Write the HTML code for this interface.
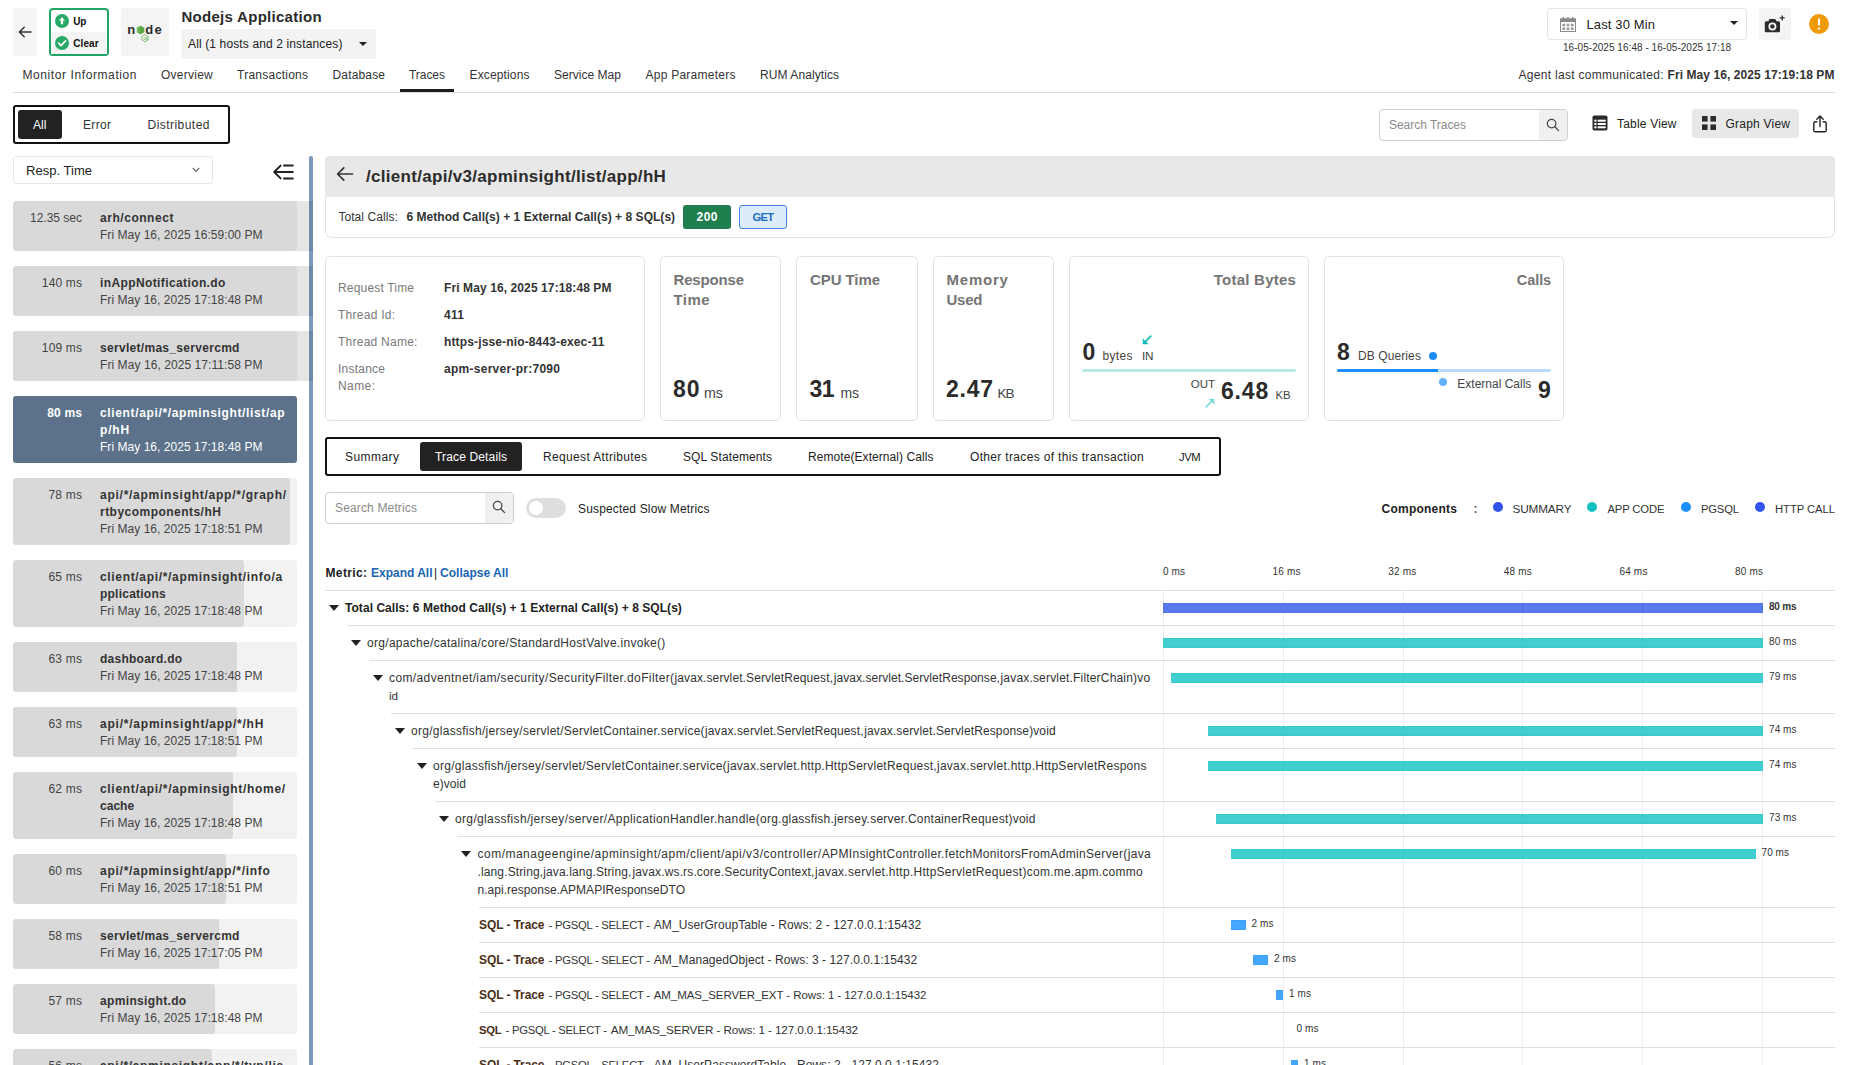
<!DOCTYPE html>
<html lang="en">
<head>
<meta charset="utf-8">
<title>Nodejs Application - Traces</title>
<style>
*{box-sizing:border-box;margin:0;padding:0}
html,body{width:1852px;height:1065px;overflow:hidden;background:#fff}
body{position:relative;font-family:"Liberation Sans",Arial,sans-serif;font-size:12px;color:#333}
.a{position:absolute;white-space:nowrap}
svg{display:block;overflow:visible}
.gbtn{background:#f4f4f4;border-radius:3px}
.status{left:49px;top:8px;width:60px;height:48px;border:2px solid #21a565;border-radius:4px;background:#fff}
.status .row2{position:absolute;left:0;right:0;top:22px;bottom:0;background:#f4f4f4}
.caret{border-left:4px solid transparent;border-right:4px solid transparent;border-top:4.5px solid #222}
.it{position:absolute;left:13px;width:284px;border-radius:3px;background:rgba(0,0,0,.05)}
.bar{position:absolute;left:13px;background:rgba(0,0,0,.1);border-radius:3px 0 0 3px}
.card{border:1px solid #e2e2e2;border-radius:5px;background:#fff;top:256px;height:165px}
.hl{height:1px;background:#e0e0e0}
.tri{width:0;height:0;border-left:5px solid transparent;border-right:5px solid transparent;border-top:6px solid #222}
.gb{height:10px}
.g1{background:rgba(47,84,235,.79);box-shadow:inset 0 1px rgba(47,84,235,.22),inset 0 -1px rgba(47,84,235,.22)}.g2{background:rgba(19,194,194,.8);box-shadow:inset 0 1px rgba(19,194,194,.25),inset 0 -1px rgba(19,194,194,.25)}.g3{background:rgba(24,144,255,.8);box-shadow:inset 0 1px rgba(24,144,255,.25),inset 0 -1px rgba(24,144,255,.25)}
.grid{top:591px;width:1px;height:474px;background:#ededed}
.dot{border-radius:50%}
</style>
</head>
<body>
<!-- HEADER -->
<div class="a gbtn" style="left:13px;top:8px;width:24px;height:48px">
<svg width="24" height="48" viewBox="0 0 24 48"><path d="M18 24H6.6M11.2 19.2L6.4 24l4.8 4.8" fill="none" stroke="#333" stroke-width="1.5" stroke-linecap="round" stroke-linejoin="round"/></svg>
</div>
<div class="a status">
<div class="row2"></div>
<svg class="a" style="left:4px;top:4px" width="14" height="14" viewBox="0 0 14 14"><circle cx="7" cy="7" r="7" fill="#27a866"/><path d="M7 3.2L3.9 6.6h2v3.6h2.2V6.6h2z" fill="#fff"/></svg>
<svg class="a" style="left:4px;top:26px" width="14" height="14" viewBox="0 0 14 14"><circle cx="7" cy="7" r="7" fill="#27a866"/><path d="M3.6 7.2l2.4 2.4 4.6-4.8" fill="none" stroke="#fff" stroke-width="1.7" stroke-linecap="round" stroke-linejoin="round"/></svg>
</div>
<div class="a" style="font-size:10px;font-weight:700;letter-spacing:-0.14px;color:#111;line-height:13px;top:15px;left:73.2px">Up</div>
<div class="a" style="font-size:10px;font-weight:700;letter-spacing:0.12px;color:#111;line-height:13px;top:37px;left:73.2px">Clear</div>
<div class="a gbtn" style="left:121px;top:8px;width:48px;height:48px">
<svg width="48" height="48" viewBox="0 0 48 48"><g font-family="Liberation Sans,sans-serif" font-size="13" font-weight="700" fill="#2e2e2e"><text x="6.3" y="25.6">n</text><text x="24.3" y="25.6">d</text><text x="33.4" y="25.6">e</text></g><path d="M19.6 17.7l3.7 2.15v4.3l-3.7 2.15-3.7-2.15v-4.3z" fill="#5aa944"/><path d="M19.6 17.7l-3.7 2.15v4.3l2.2 1.3z" fill="#6cbb52"/><path d="M24 26.4l3.2 1.85v3.7L24 33.8l-3.2-1.85v-3.7z" fill="none" stroke="#6bb85a" stroke-width=".8"/><text x="22.3" y="31.5" font-size="3.6" font-family="Liberation Sans,sans-serif" fill="#6bb85a" font-weight="700">JS</text></svg>
</div>
<div class="a" style="font-size:15px;font-weight:700;letter-spacing:0.28px;color:#2b2b2b;line-height:19px;top:7px;left:181.5px">Nodejs Application</div>
<div class="a gbtn" style="left:181px;top:29px;width:195px;height:30px;background:#f3f3f3"></div>
<div class="a" style="font-size:12px;letter-spacing:0.13px;color:#222;line-height:16px;top:36px;left:188px">All (1 hosts and 2 instances)</div>
<div class="a caret" style="left:359px;top:41.5px"></div>
<!-- time select -->
<div class="a" style="left:1547px;top:8px;width:200px;height:32px;border:1px solid #e4e4e4;border-radius:3px">
<svg class="a" style="left:12px;top:8px" width="16" height="15" viewBox="0 0 16 15"><rect x=".5" y="1.8" width="15" height="12.7" fill="#fff" stroke="#8a8a8a"/><rect x=".5" y="1.8" width="15" height="3.2" fill="#8a8a8a"/><path d="M3.4 0v2.6M8 0v2.6M12.6 0v2.6" stroke="#8a8a8a" stroke-width="1.4"/><g fill="#9a9a9a"><rect x="2.4" y="6.8" width="2.7" height="2.5"/><rect x="6.65" y="6.8" width="2.7" height="2.5"/><rect x="10.9" y="6.8" width="2.7" height="2.5"/><rect x="2.4" y="10.5" width="2.7" height="2.5"/><rect x="6.65" y="10.5" width="2.7" height="2.5"/><rect x="10.9" y="10.5" width="2.7" height="2.5"/></g></svg>
</div>
<div class="a" style="font-size:13px;letter-spacing:0.13px;color:#222;line-height:17px;top:16px;left:1586.5px">Last 30 Min</div>
<div class="a caret" style="left:1730px;top:21px"></div>
<div class="a" style="font-size:10px;letter-spacing:0.04px;color:#333;line-height:13px;top:41px;left:1563px">16-05-2025 16:48 - 16-05-2025 17:18</div>
<div class="a gbtn" style="left:1759px;top:8px;width:32px;height:32px">
<svg width="32" height="32" viewBox="0 0 32 32"><path d="M5.8 14.8c0-.9.7-1.6 1.6-1.6h2l1.1-2.2h5.8l1.1 2.2h2c.9 0 1.6.7 1.6 1.6v7.9c0 .9-.7 1.6-1.6 1.6H7.4c-.9 0-1.6-.7-1.6-1.6z" fill="#2b2b2b"/><circle cx="13.4" cy="18.4" r="4" fill="#f4f4f4"/><circle cx="13.4" cy="18.4" r="2.2" fill="#2b2b2b"/><path d="M23.2 7.4v5M20.7 9.9h5" stroke="#2b2b2b" stroke-width="1.3"/></svg>
</div>
<svg class="a" style="left:1809px;top:14px" width="20" height="20" viewBox="0 0 20 20"><circle cx="10" cy="10" r="10" fill="#f09b05"/><rect x="9" y="4.3" width="2" height="7.5" rx="1" fill="#fff"/><circle cx="10" cy="14.6" r="1.2" fill="#fff"/></svg>
<!-- NAV -->
<div class="a" style="letter-spacing:0.59px;line-height:16px;top:67px;left:22.5px">Monitor Information</div>
<div class="a" style="letter-spacing:0.25px;line-height:16px;top:67px;left:161px">Overview</div>
<div class="a" style="letter-spacing:0.25px;line-height:16px;top:67px;left:237px">Transactions</div>
<div class="a" style="letter-spacing:0.16px;line-height:16px;top:67px;left:332.5px">Database</div>
<div class="a" style="letter-spacing:-0.05px;line-height:16px;top:67px;left:409px">Traces</div>
<div class="a" style="letter-spacing:0.14px;line-height:16px;top:67px;left:469.5px">Exceptions</div>
<div class="a" style="letter-spacing:0.03px;line-height:16px;top:67px;left:554px">Service Map</div>
<div class="a" style="letter-spacing:0.25px;line-height:16px;top:67px;left:645.5px">App Parameters</div>
<div class="a" style="letter-spacing:0.08px;line-height:16px;top:67px;left:760px">RUM Analytics</div>
<div class="a" style="left:400px;top:89px;width:54px;height:3px;background:#1c1c1c"></div>
<div class="a" style="left:13px;top:92px;width:1822px;height:1px;background:#dcdcdc"></div>
<div class="a" style="letter-spacing:0.3px;line-height:16px;top:67px;left:1518.5px">Agent last communicated:</div>
<div class="a" style="font-weight:700;letter-spacing:0.08px;line-height:16px;top:67px;left:1667.5px">Fri May 16, 2025 17:19:18 PM</div>
<!-- FILTER -->
<div class="a" style="left:13px;top:105px;width:217px;height:39px;border:2px solid #111;border-radius:3px"></div>
<div class="a" style="left:18px;top:110px;width:44px;height:29px;background:#222;border-radius:3px"></div>
<div class="a" style="letter-spacing:0.08px;color:#fff;line-height:16px;top:117px;left:33px">All</div>
<div class="a" style="letter-spacing:0.33px;line-height:16px;top:117px;left:83px">Error</div>
<div class="a" style="letter-spacing:0.46px;line-height:16px;top:117px;left:147.5px">Distributed</div>
<div class="a" style="left:1379px;top:109px;width:189px;height:32px;border:1px solid #cfcfcf;border-radius:4px;overflow:hidden"><div class="a" style="left:159px;top:0;width:29px;height:30px;background:#f0f0f0"></div>
<svg class="a" style="left:166.2px;top:8.3px" width="14" height="14" viewBox="0 0 14 14"><circle cx="5.6" cy="5.6" r="4.3" fill="none" stroke="#444" stroke-width="1.2"/><path d="M8.8 8.8l3.8 3.8" stroke="#444" stroke-width="1.3" stroke-linecap="round"/></svg></div>
<div class="a" style="letter-spacing:-0.03px;color:#8a8a8a;line-height:16px;top:117px;left:1389px">Search Traces</div>
<svg class="a" style="left:1592px;top:115px" width="16" height="16" viewBox="0 0 16 16"><rect x=".5" y=".5" width="15" height="15" rx="1.8" fill="#2b2b2b"/><g fill="#fff"><rect x="2.3" y="4.7" width="2.2" height="2"/><rect x="5.7" y="4.7" width="8" height="2"/><rect x="2.3" y="8" width="2.2" height="2"/><rect x="5.7" y="8" width="8" height="2"/><rect x="2.3" y="11.3" width="2.2" height="2"/><rect x="5.7" y="11.3" width="8" height="2"/></g></svg>
<div class="a" style="letter-spacing:0.19px;color:#222;line-height:16px;top:116px;left:1617px">Table View</div>
<div class="a" style="left:1692px;top:109px;width:107px;height:28.5px;background:#e8e8e8;border-radius:3px"></div>
<svg class="a" style="left:1702px;top:116px" width="14" height="14" viewBox="0 0 14 14"><g fill="#2b2b2b"><rect width="5.6" height="5.6"/><rect x="8.4" width="5.6" height="5.6"/><rect y="8.4" width="5.6" height="5.6"/><rect x="8.4" y="8.4" width="5.6" height="5.6"/></g></svg>
<div class="a" style="letter-spacing:0.22px;color:#222;line-height:16px;top:116px;left:1725.5px">Graph View</div>
<svg class="a" style="left:1813px;top:115px" width="14" height="18" viewBox="0 0 14 18"><path d="M3.8 6.8H2.4c-.9 0-1.6.7-1.6 1.6v6.8c0 .9.7 1.6 1.6 1.6h9.2c.9 0 1.6-.7 1.6-1.6V8.4c0-.9-.7-1.6-1.6-1.6h-1.4" fill="none" stroke="#222" stroke-width="1.4" stroke-linecap="round"/><path d="M7 11.5V1.2M3.8 4.2L7 1l3.2 3.2" fill="none" stroke="#222" stroke-width="1.4" stroke-linecap="round" stroke-linejoin="round"/></svg>
<!-- LIST -->
<div class="a" style="left:13px;top:156px;width:200px;height:28px;border:1px solid #e6e6e6;border-radius:3px"></div>
<div class="a" style="font-size:13px;letter-spacing:0.03px;color:#222;line-height:17px;top:162px;left:26px">Resp. Time</div>
<svg class="a" style="left:192px;top:167px" width="8" height="6" viewBox="0 0 8 6"><path d="M.8 1l3.2 3.4L7.2 1" fill="none" stroke="#666" stroke-width="1.1"/></svg>
<svg class="a" style="left:272px;top:163px" width="22" height="18" viewBox="0 0 22 18"><path d="M12 2.4h8.8M2.2 9h18.6M12 15.6h8.8M8.6 2.6L2.2 9l6.4 6.4" fill="none" stroke="#222" stroke-width="2" stroke-linecap="round" stroke-linejoin="round"/></svg>
<div class="a" style="left:309px;top:156px;width:4px;height:909px;background:#7a9abb;border-radius:2px 2px 0 0"></div>
<div class="it" style="top:201px;height:50px"></div>
<div class="bar" style="top:201px;height:50px;width:300.0px;border-radius:3px 0 0 3px"></div>
<div class="a" style="letter-spacing:-0.01px;color:#444;line-height:16px;top:210px;right:1770.01px">12.35 sec</div>
<div>
<div class="a" style="font-weight:700;letter-spacing:0.54px;color:#333;line-height:16px;top:210px;left:100px">arh/connect</div>
</div>
<div class="a" style="letter-spacing:0.04px;color:#444;line-height:16px;top:227px;left:100px">Fri May 16, 2025 16:59:00 PM</div>
<div class="it" style="top:266px;height:50px"></div>
<div class="bar" style="top:266px;height:50px;width:300.0px;border-radius:3px 0 0 3px"></div>
<div class="a" style="letter-spacing:0.17px;color:#444;line-height:16px;top:275px;right:1769.83px">140 ms</div>
<div>
<div class="a" style="font-weight:700;letter-spacing:0.39px;color:#333;line-height:16px;top:275px;left:100px">inAppNotification.do</div>
</div>
<div class="a" style="letter-spacing:0.04px;color:#444;line-height:16px;top:292px;left:100px">Fri May 16, 2025 17:18:48 PM</div>
<div class="it" style="top:331px;height:50px"></div>
<div class="bar" style="top:331px;height:50px;width:300.0px;border-radius:3px 0 0 3px"></div>
<div class="a" style="letter-spacing:0.17px;color:#444;line-height:16px;top:340px;right:1769.83px">109 ms</div>
<div>
<div class="a" style="font-weight:700;letter-spacing:0.3px;color:#333;line-height:16px;top:340px;left:100px">servlet/mas_servercmd</div>
</div>
<div class="a" style="letter-spacing:0.07px;color:#444;line-height:16px;top:357px;left:100px">Fri May 16, 2025 17:11:58 PM</div>
<div class="it" style="top:396px;height:67px;background:#5b728a"></div>
<div class="a" style="font-weight:700;letter-spacing:0.19px;color:#fff;line-height:16px;top:405px;right:1769.81px">80 ms</div>
<div>
<div class="a" style="font-weight:700;letter-spacing:0.64px;color:#fff;line-height:16px;top:405px;left:100px">client/api/*/apminsight/list/ap</div>
<div class="a" style="font-weight:700;letter-spacing:0.84px;color:#fff;line-height:16px;top:422px;left:100px">p/hH</div>
</div>
<div class="a" style="letter-spacing:0.04px;color:#fff;line-height:16px;top:439px;left:100px">Fri May 16, 2025 17:18:48 PM</div>
<div class="it" style="top:478px;height:67px"></div>
<div class="bar" style="top:478px;height:67px;width:276.9px;border-radius:3px"></div>
<div class="a" style="letter-spacing:0.23px;color:#444;line-height:16px;top:487px;right:1769.77px">78 ms</div>
<div>
<div class="a" style="font-weight:700;letter-spacing:0.74px;color:#333;line-height:16px;top:487px;left:100px">api/*/apminsight/app/*/graph/</div>
<div class="a" style="font-weight:700;letter-spacing:0.47px;color:#333;line-height:16px;top:504px;left:100px">rtbycomponents/hH</div>
</div>
<div class="a" style="letter-spacing:0.04px;color:#444;line-height:16px;top:521px;left:100px">Fri May 16, 2025 17:18:51 PM</div>
<div class="it" style="top:560px;height:67px"></div>
<div class="bar" style="top:560px;height:67px;width:230.8px;border-radius:3px"></div>
<div class="a" style="letter-spacing:0.23px;color:#444;line-height:16px;top:569px;right:1769.77px">65 ms</div>
<div>
<div class="a" style="font-weight:700;letter-spacing:0.67px;color:#333;line-height:16px;top:569px;left:100px">client/api/*/apminsight/info/a</div>
<div class="a" style="font-weight:700;letter-spacing:0.23px;color:#333;line-height:16px;top:586px;left:100px">pplications</div>
</div>
<div class="a" style="letter-spacing:0.04px;color:#444;line-height:16px;top:603px;left:100px">Fri May 16, 2025 17:18:48 PM</div>
<div class="it" style="top:642px;height:50px"></div>
<div class="bar" style="top:642px;height:50px;width:223.7px;border-radius:3px"></div>
<div class="a" style="letter-spacing:0.23px;color:#444;line-height:16px;top:651px;right:1769.77px">63 ms</div>
<div>
<div class="a" style="font-weight:700;letter-spacing:0.25px;color:#333;line-height:16px;top:651px;left:100px">dashboard.do</div>
</div>
<div class="a" style="letter-spacing:0.04px;color:#444;line-height:16px;top:668px;left:100px">Fri May 16, 2025 17:18:48 PM</div>
<div class="it" style="top:707px;height:50px"></div>
<div class="bar" style="top:707px;height:50px;width:223.7px;border-radius:3px"></div>
<div class="a" style="letter-spacing:0.23px;color:#444;line-height:16px;top:716px;right:1769.77px">63 ms</div>
<div>
<div class="a" style="font-weight:700;letter-spacing:0.78px;color:#333;line-height:16px;top:716px;left:100px">api/*/apminsight/app/*/hH</div>
</div>
<div class="a" style="letter-spacing:0.04px;color:#444;line-height:16px;top:733px;left:100px">Fri May 16, 2025 17:18:51 PM</div>
<div class="it" style="top:772px;height:67px"></div>
<div class="bar" style="top:772px;height:67px;width:220.1px;border-radius:3px"></div>
<div class="a" style="letter-spacing:0.23px;color:#444;line-height:16px;top:781px;right:1769.77px">62 ms</div>
<div>
<div class="a" style="font-weight:700;letter-spacing:0.68px;color:#333;line-height:16px;top:781px;left:100px">client/api/*/apminsight/home/</div>
<div class="a" style="font-weight:700;letter-spacing:0.02px;color:#333;line-height:16px;top:798px;left:100px">cache</div>
</div>
<div class="a" style="letter-spacing:0.04px;color:#444;line-height:16px;top:815px;left:100px">Fri May 16, 2025 17:18:48 PM</div>
<div class="it" style="top:854px;height:50px"></div>
<div class="bar" style="top:854px;height:50px;width:213.0px;border-radius:3px"></div>
<div class="a" style="letter-spacing:0.23px;color:#444;line-height:16px;top:863px;right:1769.77px">60 ms</div>
<div>
<div class="a" style="font-weight:700;letter-spacing:0.74px;color:#333;line-height:16px;top:863px;left:100px">api/*/apminsight/app/*/info</div>
</div>
<div class="a" style="letter-spacing:0.04px;color:#444;line-height:16px;top:880px;left:100px">Fri May 16, 2025 17:18:51 PM</div>
<div class="it" style="top:919px;height:50px"></div>
<div class="bar" style="top:919px;height:50px;width:205.9px;border-radius:3px"></div>
<div class="a" style="letter-spacing:0.23px;color:#444;line-height:16px;top:928px;right:1769.77px">58 ms</div>
<div>
<div class="a" style="font-weight:700;letter-spacing:0.3px;color:#333;line-height:16px;top:928px;left:100px">servlet/mas_servercmd</div>
</div>
<div class="a" style="letter-spacing:0.04px;color:#444;line-height:16px;top:945px;left:100px">Fri May 16, 2025 17:17:05 PM</div>
<div class="it" style="top:984px;height:50px"></div>
<div class="bar" style="top:984px;height:50px;width:202.3px;border-radius:3px"></div>
<div class="a" style="letter-spacing:0.23px;color:#444;line-height:16px;top:993px;right:1769.77px">57 ms</div>
<div>
<div class="a" style="font-weight:700;letter-spacing:0.35px;color:#333;line-height:16px;top:993px;left:100px">apminsight.do</div>
</div>
<div class="a" style="letter-spacing:0.04px;color:#444;line-height:16px;top:1010px;left:100px">Fri May 16, 2025 17:18:48 PM</div>
<div class="it" style="top:1049px;height:67px"></div>
<div class="bar" style="top:1049px;height:67px;width:198.8px;border-radius:3px"></div>
<div class="a" style="letter-spacing:0.23px;color:#444;line-height:16px;top:1058px;right:1769.77px">56 ms</div>
<div>
<div class="a" style="font-weight:700;letter-spacing:0.68px;color:#333;line-height:16px;top:1058px;left:100px">api/*/apminsight/app/*/typ/lis</div>
<div class="a" style="font-weight:700;letter-spacing:1.22px;color:#333;line-height:16px;top:1075px;left:100px">t/hH</div>
</div>
<div class="a" style="letter-spacing:0.04px;color:#444;line-height:16px;top:1092px;left:100px">Fri May 16, 2025 17:18:51 PM</div>
<!-- MAIN -->
<div class="a" style="left:325px;top:156px;width:1510px;height:41px;background:#e8e8e8;border-radius:4px 4px 0 0"></div>
<svg class="a" style="left:336px;top:166px" width="18" height="16" viewBox="0 0 18 16"><path d="M16.5 8H2M7.8 1.8L1.6 8l6.2 6.2" fill="none" stroke="#333" stroke-width="1.7" stroke-linecap="round" stroke-linejoin="round"/></svg>
<div class="a" style="font-size:17px;font-weight:700;letter-spacing:0.3px;color:#2b2b2b;line-height:21px;top:166px;left:366px">/client/api/v3/apminsight/list/app/hH</div>
<div class="a" style="left:325px;top:197px;width:1510px;height:41px;border:1px solid #e2e2e2;border-top:0;border-radius:0 0 7px 7px"></div>
<div>
<div class="a" style="letter-spacing:0.07px;line-height:16px;top:209px;left:338.4px">Total Calls:</div>
<div class="a" style="font-weight:700;letter-spacing:0.04px;line-height:16px;top:209px;left:406.5px">6 Method Call(s) + 1 External Call(s) + 8 SQL(s)</div>
</div>
<div class="a" style="left:683px;top:205px;width:48px;height:24px;background:#1e7e4d;border-radius:3px"></div>
<div class="a" style="font-weight:700;letter-spacing:0.48px;color:#fff;line-height:16px;top:209px;left:696.5px">200</div>
<div class="a" style="left:739px;top:205px;width:48px;height:24px;background:#dcecfb;border:1px solid #3d87d6;border-radius:3px"></div>
<div class="a" style="font-size:11.25px;font-weight:700;letter-spacing:-0.81px;color:#1b6ec2;line-height:14px;top:210px;left:752.5px">GET</div>
<div class="a card" style="left:325px;width:320px"></div>
<div class="a" style="letter-spacing:0.18px;color:#7a7a7a;line-height:16px;top:280px;left:338px">Request Time</div>
<div class="a" style="letter-spacing:0.26px;color:#7a7a7a;line-height:16px;top:307px;left:338px">Thread Id:</div>
<div class="a" style="letter-spacing:0.25px;color:#7a7a7a;line-height:16px;top:334px;left:338px">Thread Name:</div>
<div class="a" style="letter-spacing:0.23px;color:#7a7a7a;line-height:16px;top:361px;left:338px">Instance</div>
<div class="a" style="letter-spacing:0.41px;color:#7a7a7a;line-height:16px;top:378px;left:338px">Name:</div>
<div class="a" style="font-weight:700;letter-spacing:0.1px;line-height:16px;top:280px;left:444px">Fri May 16, 2025 17:18:48 PM</div>
<div class="a" style="font-weight:700;letter-spacing:0.32px;line-height:16px;top:307px;left:444px">411</div>
<div class="a" style="font-weight:700;letter-spacing:0.14px;line-height:16px;top:334px;left:444px">https-jsse-nio-8443-exec-11</div>
<div class="a" style="font-weight:700;letter-spacing:0.27px;line-height:16px;top:361px;left:444px">apm-server-pr:7090</div>
<div class="a card" style="left:660px;width:121px"></div>
<div class="a card" style="left:796px;width:122px"></div>
<div class="a card" style="left:933px;width:121px"></div>
<div class="a card" style="left:1069px;width:240px"></div>
<div class="a card" style="left:1324px;width:240px"></div>
<div class="a" style="font-size:15px;font-weight:700;letter-spacing:-0.17px;color:#757575;line-height:19px;top:270px;left:673.5px">Response</div>
<div class="a" style="font-size:15px;font-weight:700;letter-spacing:0.42px;color:#757575;line-height:19px;top:290px;left:673.5px">Time</div>
<div class="a" style="font-size:15px;font-weight:700;letter-spacing:-0.08px;color:#757575;line-height:19px;top:270px;left:810px">CPU Time</div>
<div class="a" style="font-size:15px;font-weight:700;letter-spacing:0.79px;color:#757575;line-height:19px;top:270px;left:946.5px">Memory</div>
<div class="a" style="font-size:15px;font-weight:700;letter-spacing:-0.23px;color:#757575;line-height:19px;top:290px;left:946.5px">Used</div>
<div class="a" style="font-size:15px;font-weight:700;letter-spacing:0.25px;color:#757575;line-height:19px;top:270px;left:1213.7px">Total Bytes</div>
<div class="a" style="font-size:14.5px;font-weight:700;letter-spacing:-0.07px;color:#757575;line-height:18px;top:271px;left:1516.8px">Calls</div>
<div class="a" style="font-size:23px;font-weight:700;letter-spacing:0.91px;color:#2b2b2b;line-height:28px;top:375px;left:673px">80</div>
<div class="a" style="font-size:14.25px;letter-spacing:-0.01px;color:#444;line-height:18px;top:384px;left:704px">ms</div>
<div class="a" style="font-size:23px;font-weight:700;letter-spacing:-0.59px;color:#2b2b2b;line-height:28px;top:375px;left:809.5px">31</div>
<div class="a" style="font-size:14px;letter-spacing:-0.18px;color:#444;line-height:18px;top:384px;left:840.5px">ms</div>
<div class="a" style="font-size:23px;font-weight:700;letter-spacing:0.74px;color:#2b2b2b;line-height:28px;top:375px;left:946px">2.47</div>
<div class="a" style="font-size:13.5px;letter-spacing:-1.02px;color:#444;line-height:17px;top:385px;left:997.5px">KB</div>
<div class="a" style="font-size:23px;font-weight:700;letter-spacing:-0.2px;color:#2b2b2b;line-height:28px;top:338px;left:1082.5px">0</div>
<div class="a" style="letter-spacing:0.33px;color:#444;line-height:16px;top:348px;left:1102.5px">bytes</div>
<div class="a" style="font-size:11.75px;letter-spacing:-0.15px;color:#444;line-height:15px;top:348px;left:1142px">IN</div>
<svg class="a" style="left:1142px;top:335px" width="10" height="10" viewBox="0 0 11 11"><path d="M10.2.8L3.5 7.5" fill="none" stroke="#18bcbc" stroke-width="1.9"/><path d="M.8 10.2V3.7l6.5 6.5z" fill="#18bcbc"/></svg>
<div class="a" style="left:1082px;top:369px;width:214px;height:3px;background:#b6e9e8;border-radius:1.5px"></div>
<div class="a" style="font-size:11.5px;letter-spacing:0.01px;color:#444;line-height:14px;top:377px;left:1190.7px">OUT</div>
<svg class="a" style="left:1205px;top:398px" width="10" height="10" viewBox="0 0 11 11"><path d="M.8 10.2L7.5 3.5" fill="none" stroke="#7fdcda" stroke-width="1.9"/><path d="M10.2.8v6.5L3.7.8z" fill="#7fdcda"/></svg>
<div class="a" style="font-size:23px;font-weight:700;letter-spacing:0.81px;color:#2b2b2b;line-height:28px;top:377px;left:1221px">6.48</div>
<div class="a" style="font-size:11.25px;letter-spacing:-0.01px;color:#444;line-height:14px;top:388px;left:1275.5px">KB</div>
<div class="a" style="font-size:23px;font-weight:700;letter-spacing:0.4px;color:#2b2b2b;line-height:28px;top:338px;left:1337px">8</div>
<div class="a" style="letter-spacing:0.11px;color:#444;line-height:16px;top:348px;left:1357.9px">DB Queries</div>
<div class="a dot" style="left:1429px;top:352px;width:8px;height:8px;background:#1b8cfa"></div>
<div class="a" style="left:1337px;top:369px;width:214px;height:3px;background:#badbfd;border-radius:1.5px"></div>
<div class="a" style="left:1337px;top:369px;width:101px;height:3px;background:#1b8cfa;border-radius:1.5px 0 0 1.5px"></div>
<div class="a dot" style="left:1438.6px;top:378.4px;width:8px;height:8px;background:#63affb"></div>
<div class="a" style="letter-spacing:0px;color:#444;line-height:16px;top:376px;left:1457.3px">External Calls</div>
<div class="a" style="font-size:23px;font-weight:700;letter-spacing:0.2px;color:#2b2b2b;line-height:28px;top:376px;left:1538px">9</div>
<div class="a" style="left:325px;top:437px;width:896px;height:39px;border:2px solid #111;border-radius:3px"></div>
<div class="a" style="left:420px;top:442px;width:102px;height:29px;background:#222;border-radius:3px"></div>
<div class="a" style="letter-spacing:0.44px;color:#222;line-height:16px;top:449px;left:345px">Summary</div>
<div class="a" style="letter-spacing:0.15px;color:#fff;line-height:16px;top:449px;left:435px">Trace Details</div>
<div class="a" style="letter-spacing:0.35px;color:#222;line-height:16px;top:449px;left:543px">Request Attributes</div>
<div class="a" style="letter-spacing:0.11px;color:#222;line-height:16px;top:449px;left:683px">SQL Statements</div>
<div class="a" style="letter-spacing:0.07px;color:#222;line-height:16px;top:449px;left:808px">Remote(External) Calls</div>
<div class="a" style="letter-spacing:0.33px;color:#222;line-height:16px;top:449px;left:970px">Other traces of this transaction</div>
<div class="a" style="font-size:11.25px;letter-spacing:-0.5px;color:#222;line-height:14px;top:450px;left:1179px">JVM</div>
<div class="a" style="left:325px;top:492px;width:189px;height:32px;border:1px solid #cfcfcf;border-radius:4px;overflow:hidden"><div class="a" style="left:159px;top:0;width:29px;height:30px;background:#f0f0f0"></div><svg class="a" style="left:166.3px;top:7.4px" width="14" height="14" viewBox="0 0 14 14"><circle cx="5.6" cy="5.6" r="4.3" fill="none" stroke="#444" stroke-width="1.2"/><path d="M8.8 8.8l3.8 3.8" stroke="#444" stroke-width="1.3" stroke-linecap="round"/></svg></div>
<div class="a" style="letter-spacing:0.15px;color:#8a8a8a;line-height:16px;top:500px;left:335px">Search Metrics</div>
<div class="a" style="left:526px;top:498px;width:40px;height:20px;border-radius:10px;background:#dedede"></div>
<div class="a dot" style="left:528.6px;top:500.7px;width:14.6px;height:14.6px;background:#fff"></div>
<div class="a" style="letter-spacing:0.16px;color:#222;line-height:16px;top:501px;left:578px">Suspected Slow Metrics</div>
<div class="a" style="font-weight:700;letter-spacing:0.24px;color:#222;line-height:16px;top:501px;left:1381.5px">Components</div>
<div class="a" style="font-weight:700;color:#555;line-height:16px;top:501px;left:1473.5px">:</div>
<div class="a dot" style="left:1493px;top:502px;width:10px;height:10px;background:#2f54eb"></div>
<div class="a" style="font-size:11.75px;letter-spacing:-0.14px;color:#333;line-height:15px;top:501px;left:1512.5px">SUMMARY</div>
<div class="a dot" style="left:1587px;top:502px;width:10px;height:10px;background:#13c2c2"></div>
<div class="a" style="font-size:11.25px;letter-spacing:-0.14px;color:#333;line-height:14px;top:502px;left:1607.5px">APP CODE</div>
<div class="a dot" style="left:1681px;top:502px;width:10px;height:10px;background:#1890ff"></div>
<div class="a" style="font-size:11.25px;letter-spacing:-0.19px;color:#333;line-height:14px;top:502px;left:1701px">PGSQL</div>
<div class="a dot" style="left:1755px;top:502px;width:10px;height:10px;background:#2f54eb"></div>
<div class="a" style="font-size:11.25px;letter-spacing:-0.05px;color:#333;line-height:14px;top:502px;left:1775px">HTTP CALL</div>
<div class="a" style="font-weight:700;letter-spacing:0.36px;color:#222;line-height:16px;top:565px;left:325.5px">Metric:</div>
<div class="a" style="font-weight:700;letter-spacing:-0.01px;color:#1a64b4;line-height:16px;top:565px;left:371px">Expand All</div>
<div class="a" style="color:#222;line-height:16px;top:565px;left:434px">&#124;</div>
<div class="a" style="font-weight:700;letter-spacing:0.02px;color:#1a64b4;line-height:16px;top:565px;left:440px">Collapse All</div>
<div class="a" style="font-size:10px;letter-spacing:0.11px;color:#333;line-height:13px;top:565px;left:1163px">0 ms</div>
<div class="a" style="font-size:10px;letter-spacing:0.19px;color:#333;line-height:13px;top:565px;left:1272.6px">16 ms</div>
<div class="a" style="font-size:10px;letter-spacing:0.19px;color:#333;line-height:13px;top:565px;left:1388.2px">32 ms</div>
<div class="a" style="font-size:10px;letter-spacing:0.19px;color:#333;line-height:13px;top:565px;left:1503.8px">48 ms</div>
<div class="a" style="font-size:10px;letter-spacing:0.19px;color:#333;line-height:13px;top:565px;left:1619.4px">64 ms</div>
<div class="a" style="font-size:10px;letter-spacing:0.19px;color:#333;line-height:13px;top:565px;left:1735px">80 ms</div>
<div class="a grid" style="left:1163.0px"></div>
<div class="a grid" style="left:1282.8px"></div>
<div class="a grid" style="left:1402.6px"></div>
<div class="a grid" style="left:1522.4px"></div>
<div class="a grid" style="left:1642.2px"></div>
<div class="a grid" style="left:1762.0px"></div>
<div class="a hl" style="left:325px;top:590px;width:1510px"></div>
<div class="a tri" style="left:329px;top:605px"></div>
<div>
<div class="a" style="font-weight:700;letter-spacing:0.05px;color:#222;line-height:18px;top:599px;left:345px">Total Calls: 6 Method Call(s) + 1 External Call(s) + 8 SQL(s)</div>
</div>
<div class="a gb g1" style="left:1163.0px;top:603px;width:600.0px"></div>
<div class="a" style="font-size:10px;font-weight:700;letter-spacing:-0.21px;color:#333;line-height:13px;top:600px;left:1769px">80 ms</div>
<div class="a hl" style="left:347px;top:625px;width:1488px"></div>
<div class="a tri" style="left:351px;top:640px"></div>
<div>
<div class="a" style="letter-spacing:0.3px;color:#333;line-height:18px;top:634px;left:367px">org/apache/catalina/core/StandardHostValve.invoke()</div>
</div>
<div class="a gb g2" style="left:1163.0px;top:638px;width:600.0px"></div>
<div class="a" style="font-size:10px;letter-spacing:0.07px;color:#333;line-height:13px;top:635px;left:1769px">80 ms</div>
<div class="a hl" style="left:369px;top:660px;width:1466px"></div>
<div class="a tri" style="left:373px;top:675px"></div>
<div>
<div class="a" style="letter-spacing:0.38px;color:#333;line-height:18px;top:669px;left:389px">com/adventnet/iam/security/SecurityFilter.doFilter(</div>
<div class="a" style="letter-spacing:0.11px;color:#333;line-height:18px;top:669px;left:674.5px">javax.servlet.ServletRequest,</div>
<div class="a" style="letter-spacing:0.05px;color:#333;line-height:18px;top:669px;left:833.75px">javax.servlet.ServletResponse,</div>
<div class="a" style="letter-spacing:0.18px;color:#333;line-height:18px;top:669px;left:1000.5px">javax.servlet.FilterChain)vo</div>
<div class="a" style="font-size:11.75px;letter-spacing:-0.15px;color:#333;line-height:18px;top:686.5px;left:389px">id</div>
</div>
<div class="a gb g2" style="left:1170.5px;top:673px;width:592.5px"></div>
<div class="a" style="font-size:10px;letter-spacing:0.07px;color:#333;line-height:13px;top:670px;left:1769px">79 ms</div>
<div class="a hl" style="left:391px;top:713px;width:1444px"></div>
<div class="a tri" style="left:395px;top:728px"></div>
<div>
<div class="a" style="letter-spacing:0.28px;color:#333;line-height:18px;top:722px;left:411px">org/glassfish/jersey/servlet/ServletContainer.service(</div>
<div class="a" style="letter-spacing:0.11px;color:#333;line-height:18px;top:722px;left:705px">javax.servlet.ServletRequest,</div>
<div class="a" style="letter-spacing:0.12px;color:#333;line-height:18px;top:722px;left:864.25px">javax.servlet.ServletResponse)void</div>
</div>
<div class="a gb g2" style="left:1208.0px;top:726px;width:555.0px"></div>
<div class="a" style="font-size:10px;letter-spacing:0.07px;color:#333;line-height:13px;top:723px;left:1769px">74 ms</div>
<div class="a hl" style="left:413px;top:748px;width:1422px"></div>
<div class="a tri" style="left:417px;top:763px"></div>
<div>
<div class="a" style="letter-spacing:0.28px;color:#333;line-height:18px;top:757px;left:433px">org/glassfish/jersey/servlet/ServletContainer.service(</div>
<div class="a" style="letter-spacing:0.24px;color:#333;line-height:18px;top:757px;left:727px">javax.servlet.http.HttpServletRequest,</div>
<div class="a" style="letter-spacing:0.26px;color:#333;line-height:18px;top:757px;left:937px">javax.servlet.http.HttpServletRespons</div>
<div class="a" style="letter-spacing:0.06px;color:#333;line-height:18px;top:775px;left:433px">e)void</div>
</div>
<div class="a gb g2" style="left:1208.0px;top:761px;width:555.0px"></div>
<div class="a" style="font-size:10px;letter-spacing:0.07px;color:#333;line-height:13px;top:758px;left:1769px">74 ms</div>
<div class="a hl" style="left:435px;top:801px;width:1400px"></div>
<div class="a tri" style="left:439px;top:816px"></div>
<div>
<div class="a" style="letter-spacing:0.35px;color:#333;line-height:18px;top:810px;left:455px">org/glassfish/jersey/server/ApplicationHandler.handle(</div>
<div class="a" style="letter-spacing:0.24px;color:#333;line-height:18px;top:810px;left:760px">org.glassfish.jersey.server.ContainerRequest)void</div>
</div>
<div class="a gb g2" style="left:1215.5px;top:814px;width:547.5px"></div>
<div class="a" style="font-size:10px;letter-spacing:0.07px;color:#333;line-height:13px;top:811px;left:1769px">73 ms</div>
<div class="a hl" style="left:457px;top:836px;width:1378px"></div>
<div class="a tri" style="left:461px;top:851px"></div>
<div>
<div class="a" style="letter-spacing:0.49px;color:#333;line-height:18px;top:845px;left:477.5px">com/manageengine/apminsight/apm/client/api/v3/controller/</div>
<div class="a" style="letter-spacing:0.33px;color:#333;line-height:18px;top:845px;left:821.75px">APMInsightController.fetchMonitorsFromAdminServer(java</div>
<div class="a" style="letter-spacing:0.13px;color:#333;line-height:18px;top:863px;left:477.5px">.lang.String,java.lang.String,</div>
<div class="a" style="letter-spacing:0.14px;color:#333;line-height:18px;top:863px;left:632.5px">javax.ws.rs.core.SecurityContext,</div>
<div class="a" style="letter-spacing:0.27px;color:#333;line-height:18px;top:863px;left:815px">javax.servlet.http.HttpServletRequest)com.me.apm.commo</div>
<div class="a" style="letter-spacing:0.03px;color:#333;line-height:18px;top:881px;left:477.5px">n.api.response.APMAPIResponseDTO</div>
</div>
<div class="a gb g2" style="left:1230.5px;top:849px;width:525.0px"></div>
<div class="a" style="font-size:10px;letter-spacing:0.07px;color:#333;line-height:13px;top:846px;left:1761.5px">70 ms</div>
<div class="a hl" style="left:479px;top:907px;width:1356px"></div>
<div>
<div class="a" style="font-weight:700;letter-spacing:-0.1px;color:#4b2e16;line-height:18px;top:916px;left:479px">SQL - Trace</div>
<div class="a" style="font-size:11.25px;letter-spacing:-0.24px;color:#333;line-height:18px;top:916px;left:548.5px">- PGSQL - SELECT -</div>
<div class="a" style="letter-spacing:0.09px;color:#333;line-height:18px;top:916px;left:653.75px">AM_UserGroupTable - Rows: 2 - 127.0.0.1:15432</div>
</div>
<div class="a gb g3" style="left:1230.5px;top:920px;width:15.0px"></div>
<div class="a" style="font-size:10px;letter-spacing:0.11px;color:#333;line-height:13px;top:917px;left:1251.5px">2 ms</div>
<div class="a hl" style="left:479px;top:942px;width:1356px"></div>
<div>
<div class="a" style="font-weight:700;letter-spacing:-0.1px;color:#4b2e16;line-height:18px;top:951px;left:479px">SQL - Trace</div>
<div class="a" style="font-size:11.25px;letter-spacing:-0.24px;color:#333;line-height:18px;top:951px;left:548.5px">- PGSQL - SELECT -</div>
<div class="a" style="letter-spacing:0.06px;color:#333;line-height:18px;top:951px;left:653.75px">AM_ManagedObject - Rows: 3 - 127.0.0.1:15432</div>
</div>
<div class="a gb g3" style="left:1253.0px;top:955px;width:15.0px"></div>
<div class="a" style="font-size:10px;letter-spacing:0.11px;color:#333;line-height:13px;top:952px;left:1274px">2 ms</div>
<div class="a hl" style="left:479px;top:977px;width:1356px"></div>
<div>
<div class="a" style="font-weight:700;letter-spacing:-0.1px;color:#4b2e16;line-height:18px;top:986px;left:479px">SQL - Trace</div>
<div class="a" style="font-size:11.25px;letter-spacing:-0.24px;color:#333;line-height:18px;top:986px;left:548.5px">- PGSQL - SELECT -</div>
<div class="a" style="font-size:11.5px;letter-spacing:-0.07px;color:#333;line-height:18px;top:986px;left:653.75px">AM_MAS_SERVER_EXT - Rows: 1 - 127.0.0.1:15432</div>
</div>
<div class="a gb g3" style="left:1275.5px;top:990px;width:7.5px"></div>
<div class="a" style="font-size:10px;letter-spacing:0.11px;color:#333;line-height:13px;top:987px;left:1289px">1 ms</div>
<div class="a hl" style="left:479px;top:1012px;width:1356px"></div>
<div>
<div class="a" style="font-size:11.25px;font-weight:700;letter-spacing:-0.31px;color:#4b2e16;line-height:18px;top:1021px;left:479px">SQL</div>
<div class="a" style="font-size:11.25px;letter-spacing:-0.24px;color:#333;line-height:18px;top:1021px;left:505.5px">- PGSQL - SELECT -</div>
<div class="a" style="font-size:11.75px;letter-spacing:-0.13px;color:#333;line-height:18px;top:1020.5px;left:610.75px">AM_MAS_SERVER - Rows: 1 - 127.0.0.1:15432</div>
</div>
<div class="a" style="font-size:10px;letter-spacing:0.11px;color:#333;line-height:13px;top:1022px;left:1296.5px">0 ms</div>
<div class="a hl" style="left:479px;top:1047px;width:1356px"></div>
<div>
<div class="a" style="font-weight:700;letter-spacing:-0.1px;color:#4b2e16;line-height:18px;top:1056px;left:479px">SQL - Trace</div>
<div class="a" style="font-size:11.25px;letter-spacing:-0.24px;color:#333;line-height:18px;top:1056px;left:548.5px">- PGSQL - SELECT -</div>
<div class="a" style="letter-spacing:0.05px;color:#333;line-height:18px;top:1056px;left:653.75px">AM_UserPasswordTable - Rows: 2 - 127.0.0.1:15432</div>
</div>
<div class="a gb g3" style="left:1290.5px;top:1060px;width:7.5px"></div>
<div class="a" style="font-size:10px;letter-spacing:0.11px;color:#333;line-height:13px;top:1057px;left:1304px">1 ms</div>
</body>
</html>
